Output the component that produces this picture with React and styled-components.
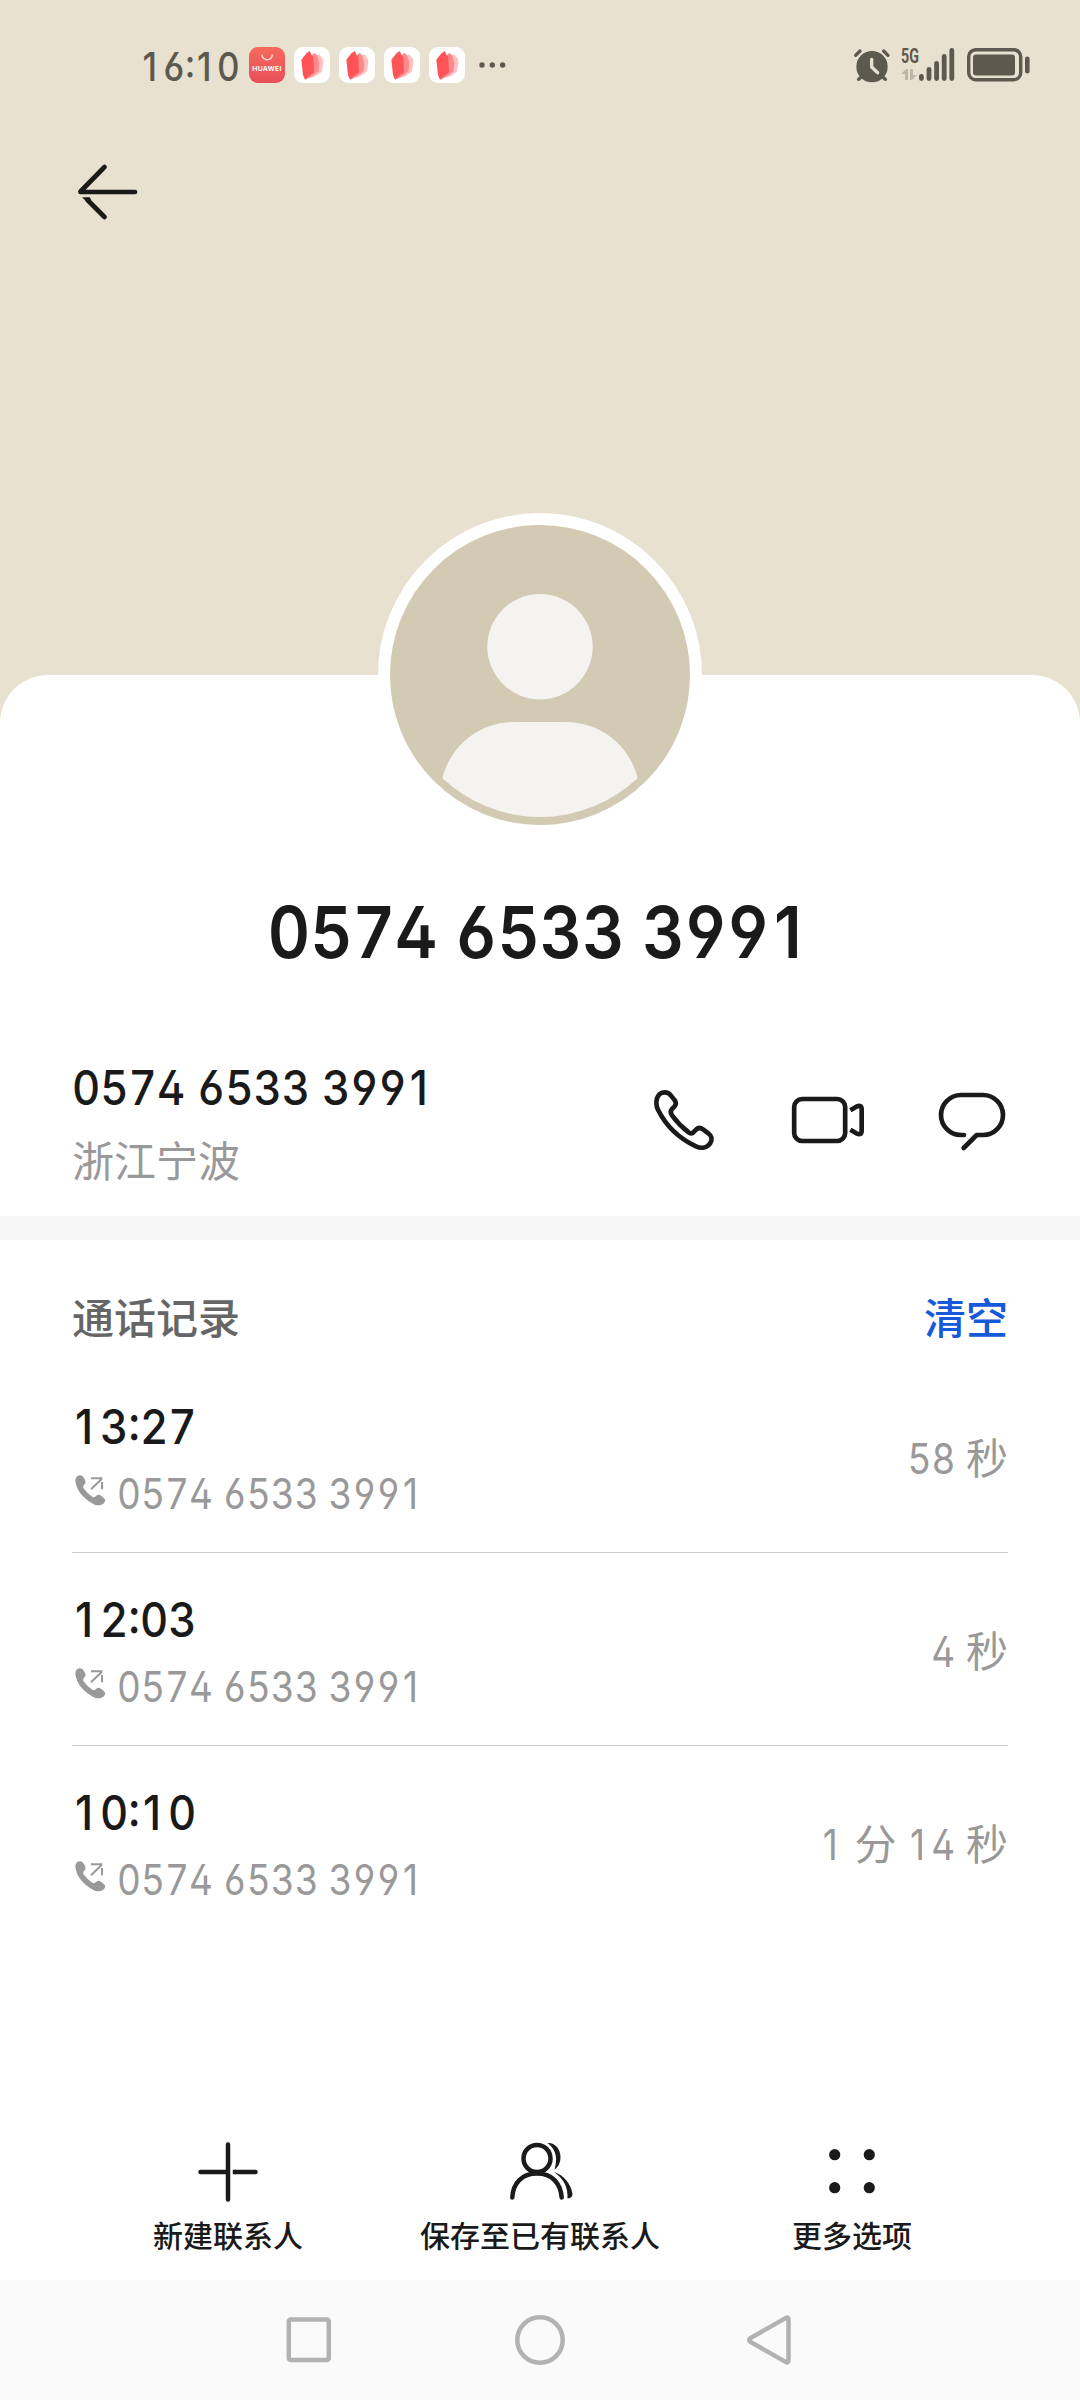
import React from 'react';
import styled, { createGlobalStyle } from 'styled-components';

const GlobalStyle = createGlobalStyle`
  * {
    box-sizing: border-box;
  }

  body {
    margin: 0;
    background: #fff;
    font-family: 'Inter', 'Noto Sans CJK SC', sans-serif;
    font-feature-settings: 'tnum', 'cv02', 'cv03', 'cv04';
  }
`;

const Screen = styled.div`
  width: 1080px;
  height: 2400px;
  display: flex;
  flex-direction: column;
  background: #e8e1cf;
  color: #1a1a1a;
  overflow: hidden;
`;

const Svg = styled.svg`
  display: block;
  flex: none;
  overflow: visible;
`;

// Condensed tabular digits
const DigitBox = styled.span`
  display: inline-block;
  white-space: pre;
  transform: scaleX(${(p) => p.$scale || 0.91});
  transform-origin: ${(p) => p.$origin || 'left'} center;
`;

// The tabular "1" has a foot, so the plain one is set in a cell of the same width
const One = styled.span`
  display: inline-block;
  width: 0.64em;
  padding-left: 0.07em;
  text-align: left;
  font-feature-settings: normal;
`;

/* Status bar */
const StatusBar = styled.div`
  height: 130px;
  display: flex;
  align-items: center;
  justify-content: space-between;
  padding: 0 50px 0 140px;
  color: #5d594e;
`;

const StatusLeft = styled.div`
  display: flex;
  align-items: center;
  gap: 9px;
`;

const Clock = styled.div`
  width: 100px;
  padding-top: 4px;
  font-size: 39px;
  line-height: 48px;
  font-weight: 500;
`;

const AppBadge = styled.div`
  width: 36px;
  height: 36px;
  border-radius: 9px;
  background: ${(p) => (p.$store ? 'linear-gradient(#f7695c, #e6505a)' : '#fff')};
  display: flex;
  flex-direction: column;
  align-items: center;
`;

const StoreName = styled.span`
  font-size: 6.8px;
  line-height: 9px;
  font-weight: 700;
  color: #fff;
  letter-spacing: 0.3px;
`;

const StatusRight = styled.div`
  display: flex;
  align-items: center;
`;

const Signal = styled.div`
  width: 54px;
  height: 36px;
  margin: 0 12px 0 11px;
  display: flex;
`;

const Network = styled.div`
  width: 18px;
  display: flex;
  flex-direction: column;
  gap: 4px;
`;

const NetworkLabel = styled.span`
  font-family: 'Roboto', sans-serif;
  font-size: 21px;
  line-height: 18px;
  font-weight: 700;
  transform: scaleX(0.68);
  transform-origin: left;
`;

/* Header */
const Header = styled.header`
  height: 545px;
  padding: 26px 72px;
`;

const Sheet = styled.main`
  flex: 1;
  display: flex;
  flex-direction: column;
  background: #fff;
  border-radius: 48px 48px 0 0;
`;

const Avatar = styled.div`
  width: 324px;
  height: 324px;
  margin: -162px auto 0;
  border: 12px solid #fff;
  border-radius: 50%;
  background: #d3cab3;
`;

const Title = styled.h1`
  margin: 53px 0 0;
  font-size: 72px;
  line-height: 84px;
  font-weight: 600;
  text-align: center;
`;

const Contact = styled.section`
  height: 242px;
  padding: 86px 72px 0;
  display: flex;
  justify-content: space-between;
`;

const PhoneNumber = styled.div`
  font-size: 48px;
  line-height: 56px;
  font-weight: 500;
`;

const Region = styled.div`
  margin-top: 21px;
  font-size: 42px;
  line-height: 50px;
  color: #999;
`;

const ContactActions = styled.div`
  display: flex;
  gap: 72px;
  margin-top: 24px;
  height: 72px;
`;

const Divider = styled.div`
  height: 24px;
  background: #f7f7f7;
`;

/* Call log */
const LogHeader = styled.div`
  display: flex;
  justify-content: space-between;
  padding: 54px 72px 16px;
  font-size: 42px;
  line-height: 50px;
  font-weight: 500;
  color: #666;
`;

const ClearButton = styled.span`
  color: #1659d9;
`;

const LogList = styled.div`
  flex: 1;
  padding: 0 72px;
`;

const LogRow = styled.div`
  display: flex;
  align-items: center;
  justify-content: space-between;
  padding: 39px 0 34px;
  border-bottom: 1px solid #ccc;

  &:last-child {
    border-bottom-color: transparent;
  }
`;

const LogTime = styled.div`
  font-size: 48px;
  line-height: 56px;
  font-weight: 500;
`;

const LogNumber = styled.div`
  display: flex;
  gap: 11px;
  margin-top: 15px;
  padding-left: 3px;
  font-size: 42px;
  line-height: 48px;
  color: #999;
`;

const Duration = styled.div`
  display: flex;
  gap: 11px;
  font-size: 42px;
  line-height: 50px;
  color: #999;
`;

const Amount = styled.span`
  margin-left: ${(p) => p.$length * -0.08}em;
`;

/* Bottom actions */
const Toolbar = styled.div`
  display: flex;
  height: 144px;
  padding: 0 72px;
`;

const ToolItem = styled.div`
  flex: 1;
  display: flex;
  flex-direction: column;
  align-items: center;
  gap: 8px;
  font-size: 30px;
  line-height: 40px;
  font-weight: 500;
  white-space: nowrap;
`;

const NavBar = styled.nav`
  height: 120px;
  display: flex;
  align-items: center;
  justify-content: center;
  gap: 171px;
  background: #fafafa;
`;

const line = {
  fill: 'none',
  stroke: 'currentColor',
  strokeLinecap: 'round',
  strokeLinejoin: 'round',
};

const calls = [
  { time: '13:27', number: '0574 6533 3991', duration: '58 秒' },
  { time: '12:03', number: '0574 6533 3991', duration: '4 秒' },
  { time: '10:10', number: '0574 6533 3991', duration: '1 分 14 秒' },
];

const bars = [
  [0, 26],
  [7.6, 19],
  [15.2, 13],
  [22.8, 6],
  [30.4, 0],
];

function Digits({ text, scale, origin }) {
  return (
    <DigitBox $scale={scale} $origin={origin}>
      {text.split(/(1)/).map((part, i) => (part === '1' ? <One key={i}>1</One> : part))}
    </DigitBox>
  );
}

function NewsBadge() {
  return (
    <AppBadge>
      <Svg width="36" height="36" viewBox="0 0 108 108">
        <path d="M66 26L76 22L80 28L87 36L88 50L83 74L64 88L36 97Z" fill="#ffc0c2" />
        <path d="M54 24L62 17L70 26L76 48L74 72L60 84L34 98Z" fill="#ff8a8d" />
        <path d="M22 38L38 18L48 12L51 22L58 30L60 76L44 88L33 98L27 84Z" fill="#ff5457" />
      </Svg>
    </AppBadge>
  );
}

function PhoneIcon() {
  return (
    <Svg width="72" height="72" viewBox="54 72 216 216" strokeWidth="14" {...line}>
      <path d="M104 97C113 97 119 101 123 107L135 122C139 128 138 134 133 140L126 147C120 154 121 159 126 166Q148 196 177 218C183 222 187 221 192 215L198 209C204 203 212 203 219 208L236 221C246 228 247 239 241 249C232 264 214 266 198 259Q120 222 84 149C78 137 78 126 81 115C85 103 94 97 104 97Z" />
    </Svg>
  );
}

function CallOutIcon() {
  return (
    <Svg width="31" height="36" viewBox="74 602 93 108">
      <path
        d="M88 618Q75 620 75 634Q80 678 133 706Q144 710 153 706Q164 702 165 691Q158 683 149 677Q143 675 138 679Q133 684 128 684Q110 672 99 656Q97 651 101 646Q108 640 105 634Q98 618 88 618Z"
        fill="#999"
      />
      <path d="M122 627H156M122 660L154 629M155 638V660" fill="none" stroke="#999" strokeWidth="6" />
    </Svg>
  );
}

export default function App() {
  return (
    <>
      <GlobalStyle />
      <Screen>
        <StatusBar>
          <StatusLeft>
            <Clock>
              <Digits text="16:10" scale={0.9} />
            </Clock>
            <AppBadge $store>
              <Svg width="36" height="17" viewBox="0 0 36 17">
                <path d="M13 7.5a5.2 5.2 0 0 0 10.4 0" fill="none" stroke="#ffd9d4" strokeWidth="1.5" />
              </Svg>
              <StoreName>HUAWEI</StoreName>
            </AppBadge>
            <NewsBadge />
            <NewsBadge />
            <NewsBadge />
            <NewsBadge />
            <Svg width="40" height="8" viewBox="0 0 40 8" fill="currentColor">
              <circle cx="8" cy="4" r="2.7" />
              <circle cx="18.3" cy="4" r="2.7" />
              <circle cx="28.6" cy="4" r="2.7" />
            </Svg>
          </StatusLeft>
          <StatusRight>
            <Svg width="36" height="36" viewBox="41 51 108 108" {...line}>
              <circle cx="95" cy="110" r="47" fill="currentColor" stroke="none" />
              <path d="M46 76L59 63M143 76L130 63" strokeWidth="10" />
              <path d="M55 148L66 138M135 148L124 138" strokeWidth="10" />
              <path d="M94 88V111L112 128" stroke="#e8e1cf" strokeWidth="10" />
            </Svg>
            <Signal>
              <Network>
                <NetworkLabel>5G</NetworkLabel>
                <Svg width="16" height="12" viewBox="0 0 16 12" fill="#bdb8a8">
                  <path d="M0 5L5 0H7V11H4V5ZM9 0H12V6H16L11 11H9Z" />
                </Svg>
              </Network>
              <Svg width="36" height="36" viewBox="0 0 36 36" fill="currentColor">
                {bars.map(([x, y]) => (
                  <rect key={x} x={x} y={y + 1} width="4.8" height={33 - y} rx="2.4" />
                ))}
              </Svg>
            </Signal>
            <Svg width="63" height="34" viewBox="0 0 63 34">
              <rect x="1.7" y="1.7" width="52" height="30" rx="7" {...line} strokeWidth="3.4" />
              <rect x="6" y="6.5" width="42" height="21" rx="3" fill="currentColor" />
              <rect x="58" y="8.5" width="4.6" height="17" rx="2.3" fill="currentColor" />
            </Svg>
          </StatusRight>
        </StatusBar>

        <Header>
          <Svg width="72" height="72" viewBox="0 0 72 72" strokeWidth="4.7" {...line}>
            <path d="M32.5 11L8.5 35.5M8.5 36H63" />
            <path d="M15.5 44L32.5 61" />
            <path d="M10 41.2H18L19 44L15 46Z" fill="currentColor" stroke="none" />
          </Svg>
        </Header>

        <Sheet>
          <Avatar>
            <Svg width="300" height="300" viewBox="0 0 300 300" fill="#f5f3ef">
              <circle cx="150" cy="121.7" r="52.7" />
              <path d="M125 197H175A74 74 0 0 1 247.7 253A142 142 0 0 1 52.3 253A74 74 0 0 1 125 197Z" />
            </Svg>
          </Avatar>
          <Title>
            <Digits text="0574 6533 3991" origin="center" />
          </Title>
          <Contact>
            <div>
              <PhoneNumber>
                <Digits text="0574 6533 3991" />
              </PhoneNumber>
              <Region>浙江宁波</Region>
            </div>
            <ContactActions>
              <PhoneIcon />
              <Svg width="72" height="72" viewBox="486 72 216 216" strokeWidth="14" {...line}>
                <rect x="492.5" y="117" width="153" height="126" rx="24" />
                <path
                  d="M661 151L679 140Q695 133 695 148V212Q695 227 679 220L661 209"
                  strokeLinecap="butt"
                />
              </Svg>
              <Svg width="72" height="72" viewBox="918 72 216 216" strokeWidth="14" {...line}>
                <path d="M1002 225H993A60 60 0 0 1 993 105H1059A60 60 0 0 1 1059 225H1040L1001 264" />
              </Svg>
            </ContactActions>
          </Contact>
          <Divider />
          <LogHeader>
            <span>通话记录</span>
            <ClearButton>清空</ClearButton>
          </LogHeader>
          <LogList>
            {calls.map((call) => (
              <LogRow key={call.time}>
                <div>
                  <LogTime>
                    <Digits text={call.time} />
                  </LogTime>
                  <LogNumber>
                    <CallOutIcon />
                    <Digits text={call.number} scale={0.88} />
                  </LogNumber>
                </div>
                <Duration>
                  {call.duration.split(' ').map((part, i) =>
                    /\d/.test(part) ? (
                      <Amount key={i} $length={part.length}>
                        <Digits text={part} scale={0.88} origin="right" />
                      </Amount>
                    ) : (
                      <span key={i}>{part}</span>
                    )
                  )}
                </Duration>
              </LogRow>
            ))}
          </LogList>
          <Toolbar>
            <ToolItem>
              <Svg width="72" height="72" viewBox="0 0 72 72" strokeWidth="4.5" {...line}>
                <path d="M36 8.5V63.5M8.5 36H36" />
                <path d="M43 36H63.5" />
                <path d="M40.8 33.75H44V38.25H40.8Z" fill="currentColor" stroke="none" />
              </Svg>
              新建联系人
            </ToolItem>
            <ToolItem>
              <Svg width="72" height="72" viewBox="0 0 72 72" strokeWidth="4.5" {...line}>
                <circle cx="33" cy="22.5" r="13.5" />
                <path d="M8.3 61.5C9 47 18 37.5 33 37.5S56.5 47 57.7 61.5" />
                <path
                  d="M43.500 7C51 6.500 56.500 13 56.500 21C56.500 27 54 31.500 50.500 33.500C53.500 24 53 14 43.500 7Z"
                  fill="currentColor"
                  stroke="none"
                />
                <path
                  d="M50 36C60 39 67 48 68.500 58Q68.500 62 63.500 62.500C64 51 60 43 50 36Z"
                  fill="currentColor"
                  stroke="none"
                />
              </Svg>
              保存至已有联系人
            </ToolItem>
            <ToolItem>
              <Svg width="72" height="72" viewBox="0 0 72 72" fill="currentColor">
                <circle cx="18.7" cy="18.7" r="5.6" />
                <circle cx="53.3" cy="18.7" r="5.6" />
                <circle cx="18.7" cy="51.7" r="5.6" />
                <circle cx="53.3" cy="51.7" r="5.6" />
              </Svg>
              更多选项
            </ToolItem>
          </Toolbar>
        </Sheet>

        <NavBar>
          <Svg width="60" height="60" viewBox="0 0 60 60" fill="none" stroke="#b2b2b2" strokeWidth="4.5">
            <rect x="9.8" y="9.6" width="40" height="40.5" rx="2" />
          </Svg>
          <Svg width="60" height="60" viewBox="0 0 60 60" fill="none" stroke="#b2b2b2" strokeWidth="4.5">
            <circle cx="30" cy="30" r="22.7" />
          </Svg>
          <Svg width="60" height="60" viewBox="0 0 60 60" fill="none" stroke="#b2b2b2" strokeWidth="4.5">
            <path d="M45.6 7.6Q47.5 7 47.5 9.5V50.5Q47.5 53 45.6 52.4L9.5 32Q7 30 9.5 28Z" />
          </Svg>
        </NavBar>
      </Screen>
    </>
  );
}
